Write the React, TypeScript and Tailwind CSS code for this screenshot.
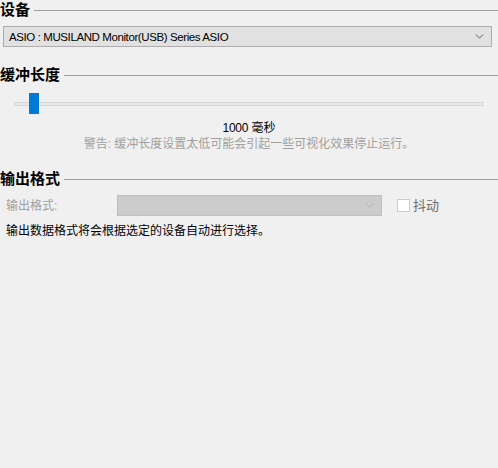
import { ChevronDown } from "lucide-react";

const cjk = "font-['Liberation_Sans','Noto_Sans_CJK_SC',sans-serif]";

function Header({ title }: { title: string }) {
    return (
        <div className="flex items-center h-[20px]">
            <span className="text-[15px] font-bold leading-[20px] text-black">{title}</span>
            <div className="flex-1 h-px bg-[#a0a0a0] ml-[4px]"></div>
        </div>
    );
}

export default function App() {
    return (
        <div className={`w-[498px] h-[468px] bg-[#f0f0f0] text-[12px] ${cjk}`}>
            <Header title="设备" />
            <div className="ml-[3px] mt-[6px] w-[489px] h-[21px] flex items-center justify-between bg-[#e1e1e1] border border-[#adadad] pl-[5px] pr-[5px]">
                <span className="text-black text-[11.5px] tracking-[-0.4px] leading-[16px]">ASIO : MUSILAND Monitor(USB) Series ASIO</span>
                <ChevronDown size={13} strokeWidth={1.5} className="text-[#404040]" />
            </div>

            <div className="mt-[18px]">
                <Header title="缓冲长度" />
            </div>
            <div className="relative mt-[8px] h-[21px] mx-[14px] flex items-center">
                <div className="w-full h-[4px] bg-[#e7eaea] border border-[#d6d6d6]"></div>
                <div className="absolute left-[15px] top-0 w-[10px] h-[21px] bg-[#0078d7]"></div>
            </div>
            <div className="mt-[6px] h-[16px] leading-[16px] text-center text-black">
                <span className="tracking-[-0.3px]">1000</span> 毫秒
            </div>
            <div className="h-[16px] leading-[16px] text-center text-[#a0a0a0]">警告: 缓冲长度设置太低可能会引起一些可视化效果停止运行。</div>

            <div className="mt-[17px]">
                <Header title="输出格式" />
            </div>
            <div className="mt-[6px] h-[21px] flex items-center">
                <span className="ml-[6px] w-[111px] text-[#a0a0a0] leading-[16px]">输出格式:</span>
                <div className="w-[265px] h-[21px] flex items-center justify-end bg-[#cccccc] border border-[#bfbfbf] pr-[5px]">
                    <ChevronDown size={13} strokeWidth={1.5} className="text-[#a8a8a8]" />
                </div>
                <div className="ml-[15px] w-[13px] h-[13px] bg-white border border-[#cccccc]"></div>
                <span className="ml-[3px] text-[#6d6d6d] text-[13px] leading-[16px]">抖动</span>
            </div>
            <div className="mt-[7px] ml-[6px] h-[16px] leading-[16px] text-black">输出数据格式将会根据选定的设备自动进行选择。</div>
        </div>
    );
}
